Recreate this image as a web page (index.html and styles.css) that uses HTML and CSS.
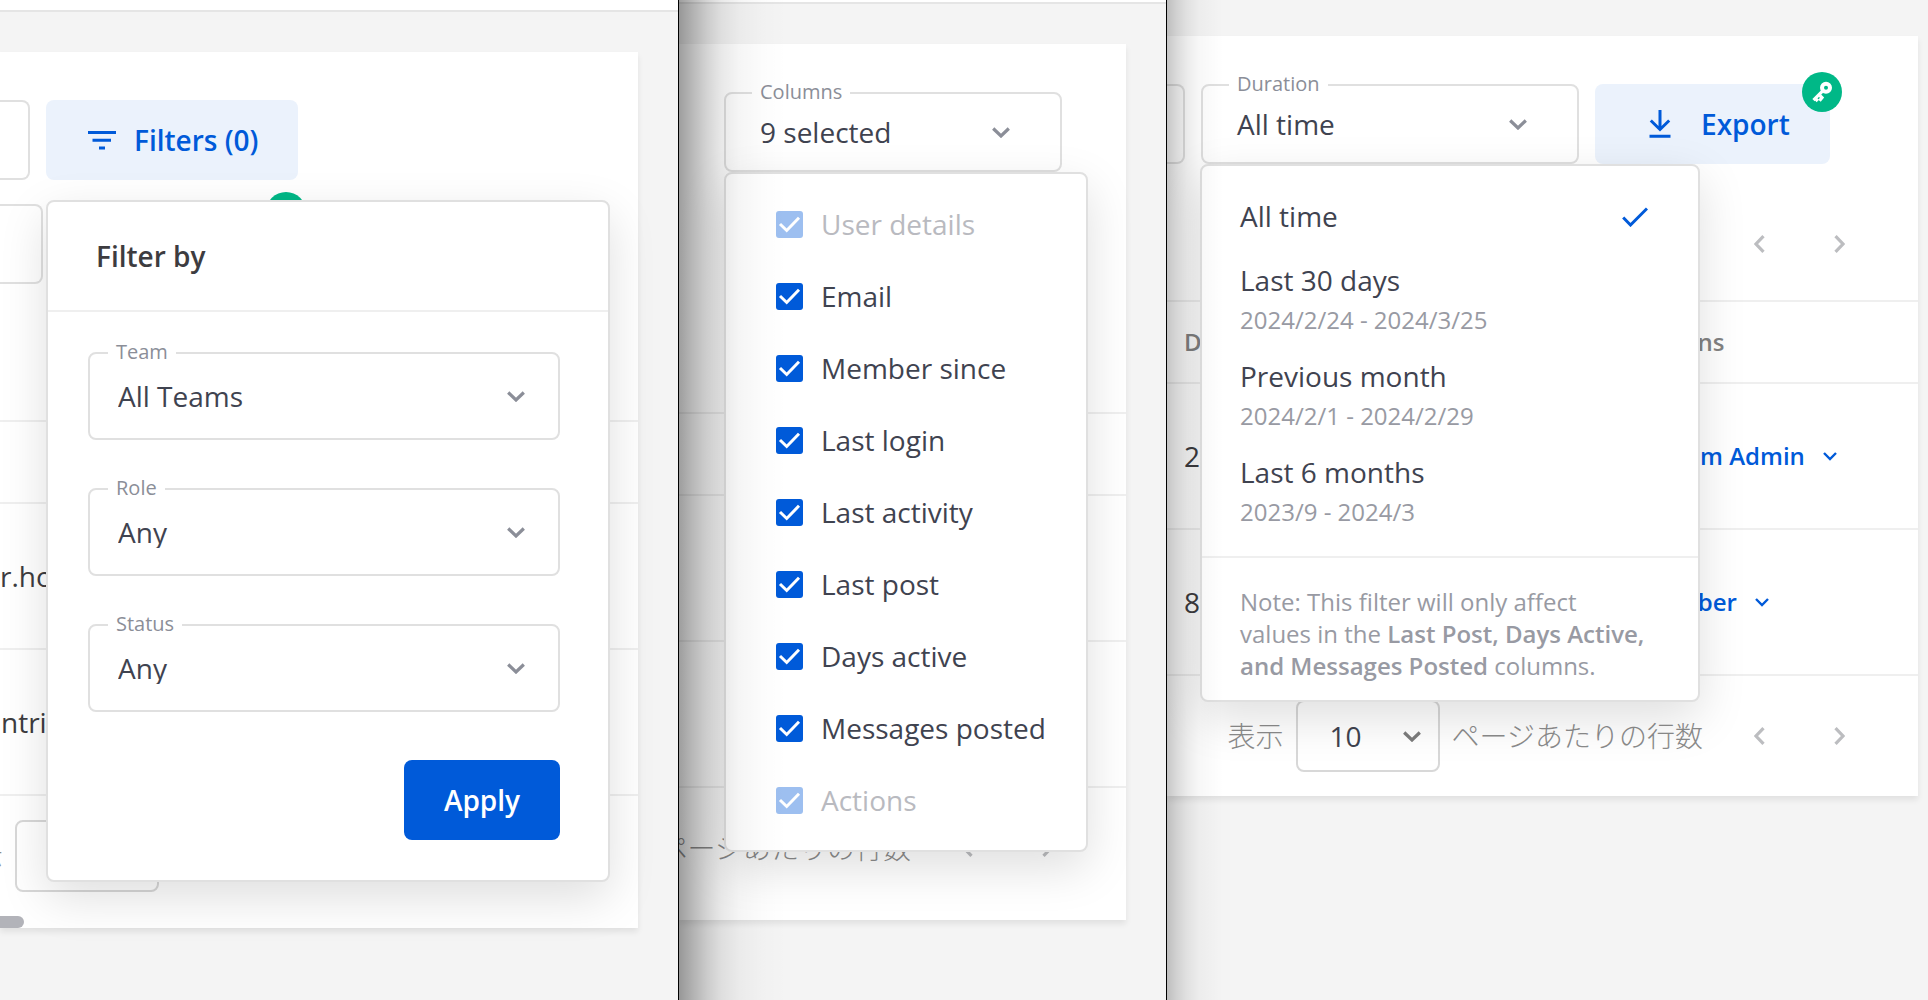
FILE: index.html
```html
<!DOCTYPE html>
<html lang="en">
<head>
<meta charset="utf-8">
<title>User management filters</title>
<link rel="stylesheet" href="styles.css">
</head>
<body>
<svg class="sprite" aria-hidden="true">
  <symbol id="chevron" viewBox="0 0 18 11"><path d="M1.2 1.5 9 9l7.800-7.500" fill="none" stroke="currentColor" stroke-width="3.200"/></symbol>
  <symbol id="chevron-thin" viewBox="0 0 14 9"><path d="M1 1l6 6 6-6" fill="none" stroke="currentColor" stroke-width="2.400"/></symbol>
  <symbol id="prev" viewBox="0 0 11 18"><path d="M9.500 1.200 2 9l7.500 7.800" fill="none" stroke="currentColor" stroke-width="3.200"/></symbol>
  <symbol id="next" viewBox="0 0 11 18"><path d="M1.500 1.200 9 9l-7.500 7.800" fill="none" stroke="currentColor" stroke-width="3.200"/></symbol>
  <symbol id="key" viewBox="0 0 40 40"><circle cx="24" cy="15.700" r="4" fill="none" stroke="currentColor" stroke-width="4"/><path d="M21.500 18.200 11.500 28.200M13 26.200l2.800 2.800M16.800 22.500l3.200 3.200-2.500 3" fill="none" stroke="currentColor" stroke-width="3.200"/></symbol>
  <symbol id="download" viewBox="0 0 22 28"><path d="M11 0v19M1.800 10.500 11 19.500l9.200-9M.5 26.200h21" fill="none" stroke="currentColor" stroke-width="3"/></symbol>
</svg>
<main class="panels">
  <section class="panel panel-filters">
    <header class="topbar"></header>
    <div class="card">
      <div class="toolbar">
        <input class="search" type="text" aria-label="Search users">
        <div class="anchor">
          <button class="btn btn-tint btn-filters" type="button">
            <svg width="28" height="19" viewBox="0 0 28 19" aria-hidden="true"><path d="M0 1.500h28M4.500 9.200h18.500M11 17h6" stroke="currentColor" stroke-width="3"/></svg>
            Filters (0)
          </button>
          <form class="popover filter-popover">
            <h2 class="filter-title">Filter by</h2>
            <div class="filter-body">
              <div class="field">
                <label for="team">Team</label>
                <select id="team"><option>All Teams</option></select>
                <svg class="caret" width="18" height="11" aria-hidden="true"><use href="#chevron"/></svg>
              </div>
              <div class="field">
                <label for="role">Role</label>
                <select id="role"><option>Any</option></select>
                <svg class="caret" width="18" height="11" aria-hidden="true"><use href="#chevron"/></svg>
              </div>
              <div class="field">
                <label for="status">Status</label>
                <select id="status"><option>Any</option></select>
                <svg class="caret" width="18" height="11" aria-hidden="true"><use href="#chevron"/></svg>
              </div>
              <button class="btn btn-primary" type="button">Apply</button>
            </div>
          </form>
        </div>
      </div>
      <div class="toolbar toolbar-second">
        <input class="search search-wide" type="text" aria-label="Duration">
        <div class="anchor anchor-under">
          <button class="btn btn-tint btn-export" type="button" aria-label="Export"></button>
          <span class="badge"></span>
        </div>
      </div>
      <div class="nav"></div>
      <table class="grid">
        <thead><tr><th></th></tr></thead>
        <tbody><tr><td>r.ho</td></tr><tr><td class="cell-inset">ntri</td></tr></tbody>
      </table>
      <div class="pager">
        <label for="rows-1" class="pager-text">表示</label>
        <div class="rows"><select id="rows-1"><option></option></select></div>
      </div>
      <div class="scrollbar"></div>
    </div>
  </section>

  <section class="panel panel-columns">
    <header class="topbar"></header>
    <div class="card">
      <div class="toolbar">
        <div class="field field-menu">
          <label for="columns">Columns</label>
          <button id="columns" type="button" aria-haspopup="true">9 selected</button>
          <svg class="caret" width="18" height="11" aria-hidden="true"><use href="#chevron"/></svg>
          <div class="popover columns-menu">
            <label class="check is-disabled"><input type="checkbox" checked disabled>User details</label>
            <label class="check"><input type="checkbox" checked>Email</label>
            <label class="check"><input type="checkbox" checked>Member since</label>
            <label class="check"><input type="checkbox" checked>Last login</label>
            <label class="check"><input type="checkbox" checked>Last activity</label>
            <label class="check"><input type="checkbox" checked>Last post</label>
            <label class="check"><input type="checkbox" checked>Days active</label>
            <label class="check"><input type="checkbox" checked>Messages posted</label>
            <label class="check is-disabled"><input type="checkbox" checked disabled>Actions</label>
          </div>
        </div>
      </div>
      <div class="nav"></div>
      <table class="grid">
        <thead><tr><th></th></tr></thead>
        <tbody><tr><td></td></tr><tr><td></td></tr></tbody>
      </table>
      <div class="pager">
        <span class="pager-text">ページあたりの行数</span>
        <div class="steps">
          <button type="button" aria-label="Previous page"><svg width="11" height="18"><use href="#prev"/></svg></button>
          <button type="button" aria-label="Next page"><svg width="11" height="18"><use href="#next"/></svg></button>
        </div>
      </div>
      <div class="scrollbar scrollbar-empty"></div>
    </div>
  </section>

  <section class="panel panel-duration">
    <div class="card">
      <div class="toolbar">
        <input class="search" type="text" aria-label="Columns">
        <div class="field field-menu">
          <label for="duration">Duration</label>
          <button id="duration" type="button" aria-haspopup="true">All time</button>
          <svg class="caret" width="18" height="11" aria-hidden="true"><use href="#chevron"/></svg>
          <div class="popover duration-menu">
            <ul class="options">
              <li class="option">All time<svg width="26" height="20" viewBox="0 0 26 20" aria-hidden="true"><path d="M1.200 10.500 8.500 18 25 1.500" fill="none" stroke="currentColor" stroke-width="3"/></svg></li>
              <li class="option"><div>Last 30 days<small>2024/2/24 - 2024/3/25</small></div></li>
              <li class="option"><div>Previous month<small>2024/2/1 - 2024/2/29</small></div></li>
              <li class="option"><div>Last 6 months<small>2023/9 - 2024/3</small></div></li>
            </ul>
            <p class="note">Note: This filter will only affect<br>values in the <b>Last Post, Days Active, and Messages Posted</b> columns.</p>
          </div>
        </div>
        <div class="anchor anchor-under">
          <button class="btn btn-tint btn-export" type="button">
            <svg width="22" height="28" aria-hidden="true"><use href="#download"/></svg>
            Export
          </button>
          <span class="badge"><svg width="40" height="40" aria-hidden="true"><use href="#key"/></svg></span>
        </div>
      </div>
      <div class="nav">
        <div class="steps">
          <button type="button" aria-label="Previous page"><svg width="11" height="18"><use href="#prev"/></svg></button>
          <button type="button" aria-label="Next page"><svg width="11" height="18"><use href="#next"/></svg></button>
        </div>
      </div>
      <table class="grid">
        <thead><tr><th>D</th><th class="col-actions">Actions</th></tr></thead>
        <tbody>
          <tr><td>2</td><td class="col-actions"><button class="role" type="button">System Admin<svg width="14" height="9"><use href="#chevron-thin"/></svg></button></td></tr>
          <tr><td>8</td><td class="col-actions"><button class="role" type="button">Member<svg width="14" height="9"><use href="#chevron-thin"/></svg></button></td></tr>
        </tbody>
      </table>
      <div class="pager">
        <label for="rows-3" class="pager-text">表示</label>
        <div class="rows">
          <select id="rows-3"><option>10</option></select>
          <svg class="caret" width="18" height="11" aria-hidden="true"><use href="#chevron"/></svg>
        </div>
        <span class="pager-text">ページあたりの行数</span>
        <div class="steps">
          <button type="button" aria-label="Previous page"><svg width="11" height="18"><use href="#prev"/></svg></button>
          <button type="button" aria-label="Next page"><svg width="11" height="18"><use href="#next"/></svg></button>
        </div>
      </div>
    </div>
  </section>
</main>
</body>
</html>
```
FILE: styles.css
```css
:root {
  --blue: #005ad9;
  --tint: #ebf2fc;
  --text: #3f4350;
  --ink: #3d3c40;
  --muted: #8b8e98;
  --line: #efefef;
  --border: #e0e0e0;
  --green: #00b887;
}
* { box-sizing: border-box; }
body {
  margin: 0;
  background: #f4f4f4;
  color: var(--text);
  font: 28px/32px "Open Sans", "Noto Sans CJK JP", sans-serif;
}
button, select, input { font: inherit; color: inherit; margin: 0; }
button { cursor: pointer; }
.sprite { display: none; }

/* Panels */
.panels {
  display: grid;
  grid-template-columns: 679fr 488fr 761fr;
  min-height: 100vh;
}
.panel {
  position: relative;
  min-width: 0;
  overflow: hidden;
}
.panel-filters, .panel-columns { border-right: 1px solid #000; }
.panel-columns::after, .panel-duration::after {
  content: "";
  position: absolute;
  inset: 0;
  z-index: 5;
  pointer-events: none;
}
.panel-columns::after {
  background: linear-gradient(90deg, rgba(0,0,0,.38), rgba(0,0,0,.27) 14px, rgba(0,0,0,.17) 28px, rgba(0,0,0,.09) 42px, rgba(0,0,0,.04) 60px, rgba(0,0,0,.01) 84px, transparent 108px);
}
.panel-duration::after {
  background: linear-gradient(90deg, rgba(0,0,0,.22), rgba(0,0,0,.14) 10px, rgba(0,0,0,.08) 20px, rgba(0,0,0,.03) 32px, transparent 56px);
}
.topbar { background: #fff; border-bottom: 2px solid #e5e5e5; margin-bottom: 40px; }
.panel-filters .topbar { height: 12px; }
.panel-columns .topbar { height: 4px; }
.card {
  margin-right: 40px;
  padding-top: 48px;
  background: #fff;
  box-shadow: 0 4px 6px rgba(0,0,0,.08);
}
.panel-duration .card { margin: 36px 10px 0 0; }

/* Toolbar */
.toolbar { display: flex; gap: 16px; }
.toolbar-second { margin-top: 24px; }
.search {
  width: 30px;
  height: 80px;
  padding: 0;
  background: #fff;
  border: 2px solid var(--border);
  border-left: 0;
  border-radius: 0 8px 8px 0;
}
.search-wide { width: 43px; }
.panel-duration .search { width: 18px; }
.anchor { position: relative; z-index: 2; }
.anchor-under { z-index: 1; }
.btn {
  display: flex;
  align-items: center;
  height: 80px;
  border: 0;
  border-radius: 8px;
  font-weight: 600;
}
.btn-tint { background: var(--tint); color: var(--blue); }
.btn-filters { gap: 18px; padding: 0 40px 0 42px; }
.btn-export { gap: 30px; width: 235px; padding: 0 0 0 54px; }
.btn-primary {
  width: 156px;
  justify-content: center;
  align-self: flex-end;
  background: var(--blue);
  color: #fff;
}
.badge {
  position: absolute;
  top: -12px;
  right: -12px;
  width: 40px;
  height: 40px;
  border-radius: 50%;
  background: var(--green);
  color: #fff;
}
.badge svg { display: block; }

/* Outlined fields */
.field { position: relative; display: grid; }
.field > label {
  position: absolute;
  top: -12px;
  left: 20px;
  padding: 0 8px;
  background: #fff;
  color: var(--muted);
  font-size: 20px;
  line-height: 24px;
}
.field > select, .field > button {
  grid-area: 1 / 1;
  height: 88px;
  padding: 0 28px;
  appearance: none;
  background: #fff;
  border: 2px solid var(--border);
  border-radius: 8px;
  text-align: left;
}
.field > .caret {
  grid-area: 1 / 1;
  place-self: center end;
  margin-right: 35px;
  color: var(--muted);
  pointer-events: none;
}
.field-menu > label { left: 28px; }
.field-menu > button { height: 80px; padding: 0 34px; }
.field-menu > .caret { margin-right: 52px; }
.field-menu { z-index: 2; }
.panel-columns .field { width: 338px; margin-left: 45px; }
.panel-duration .field { width: 378px; }

/* Popovers */
.popover {
  position: absolute;
  left: 0;
  top: 80px;
  background: #fff;
  border: 2px solid var(--border);
  border-radius: 8px;
  box-shadow: 0 16px 48px rgba(0,0,0,.13);
}
.filter-popover { top: 100px; width: 564px; }
.filter-title {
  margin: 0;
  padding: 38px 48px;
  border-bottom: 2px solid var(--line);
  color: var(--ink);
  font-size: 28px;
  font-weight: 600;
}
.filter-body {
  display: flex;
  flex-direction: column;
  gap: 48px;
  padding: 40px 48px 40px 40px;
}
.columns-menu { width: 364px; padding: 14px 0; }
.check {
  display: flex;
  align-items: center;
  gap: 18px;
  height: 72px;
  padding-left: 50px;
}
.check input {
  appearance: none;
  width: 27px;
  height: 27px;
  border-radius: 3px;
  background: var(--blue) url("data:image/svg+xml,%3Csvg xmlns='http://www.w3.org/2000/svg' viewBox='0 0 27 27'%3E%3Cpath d='M4 13l6.700 6.500L23 6.800' fill='none' stroke='white' stroke-width='3'/%3E%3C/svg%3E");
}
.is-disabled { color: #b9bac0; }
.is-disabled input { opacity: .38; }
.duration-menu { left: -1px; width: 500px; }
.options { margin: 0; padding: 22px 0 16px; list-style: none; }
.option {
  display: flex;
  justify-content: space-between;
  align-items: flex-start;
  min-height: 64px;
  padding: 12px 50px 12px 38px;
}
.option svg { margin-top: 7px; color: var(--blue); }
.option small { display: block; margin-top: 8px; color: #989aa3; font-size: 24px; }
.note {
  margin: 0;
  padding: 28px 40px 18px 38px;
  border-top: 2px solid var(--line);
  color: #989aa3;
  font-size: 24px;
}
.note b { font-weight: 600; }

/* Table */
.nav { height: 80px; margin: 40px 0 16px; padding-right: 39px; display: flex; justify-content: flex-end; }
.panel-columns .nav { margin-top: 144px; }
.steps { display: flex; }
.steps button {
  display: grid;
  place-content: center;
  width: 80px;
  height: 80px;
  padding: 0;
  border: 0;
  background: none;
  color: #bcbdc0;
}
.grid {
  width: 100%;
  table-layout: fixed;
  border-collapse: separate;
  border-spacing: 0;
  border-top: 2px solid var(--line);
  color: var(--ink);
}
.grid th, .grid td { padding: 0; border-bottom: 2px solid var(--line); text-align: left; }
.grid th { height: 82px; color: #828282; font-size: 24px; font-weight: 600; }
.grid td { height: 146px; }
.grid .cell-inset { padding-left: 1px; }
.panel-duration .grid th:first-child, .panel-duration .grid td:first-child { padding-left: 17px; }
.grid .col-actions { width: 279px; }
.role {
  display: flex;
  align-items: center;
  gap: 18px;
  padding: 0;
  border: 0;
  background: none;
  color: var(--blue);
  font-size: 24px;
  font-weight: 600;
}

/* Pagination */
.pager {
  display: flex;
  justify-content: flex-end;
  align-items: center;
  gap: 12px;
  height: 120px;
  padding-right: 39px;
}
.pager > * { flex: none; }
.pager-text { color: #8b8b8b; font-weight: 300; white-space: nowrap; }
.pager .steps { margin-left: 4px; }
.rows { display: grid; width: 144px; }
.rows select {
  grid-area: 1 / 1;
  height: 72px;
  padding: 0 32px;
  appearance: none;
  background: #fff;
  border: 2px solid #d8d8d8;
  border-radius: 8px;
}
.rows .caret { grid-area: 1 / 1; place-self: center end; margin-right: 19px; color: #7c7c7c; pointer-events: none; }
.panel-filters .pager { padding-right: 479px; }
.scrollbar { width: 24px; height: 12px; border-radius: 0 6px 6px 0; background: #b2b3b9; }
.scrollbar-empty { background: none; }
```
